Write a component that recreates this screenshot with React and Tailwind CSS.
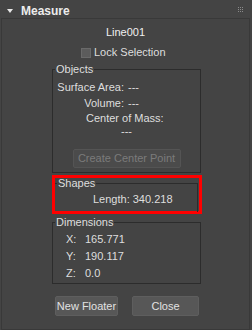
import React from "react";

function Legend({ children, className = "" }) {
  return (
    <legend className={`ml-[2px] px-[1px] h-[13px] leading-[13px] text-[#dedede] ${className}`}>
      {children}
    </legend>
  );
}

export default function App() {
  return (
    <div
      className="w-[252px] h-[330px] bg-[#444444] text-[11px] text-[#dedede] overflow-hidden"
      style={{ fontFamily: '"Liberation Sans", Arial, sans-serif' }}
    >
      {/* Header */}
      <div className="h-[18px] flex items-start pt-[4px]">
        <svg className="ml-[7px] mt-[5px]" width="6" height="4" viewBox="0 0 6 4">
          <polygon points="0,0 6,0 3,4" fill="#e8e8e8" />
        </svg>
        <span className="ml-[8px] text-[12px] leading-[14px] font-bold text-[#ececec]">Measure</span>
        <svg className="ml-auto mr-[8px] mt-[3px]" width="6" height="6" viewBox="0 0 6 6">
          {[0, 2, 4].map((y) =>
            [0, 2, 4].map((x) => (
              <rect key={`${x}-${y}`} x={x} y={y} width="1" height="1" fill="#8a8a8a" />
            ))
          )}
        </svg>
      </div>

      {/* Body */}
      <div className="ml-[1px] w-[249px] h-[312px] border border-[#393939] flex flex-col">
        <div className="mt-[7px] h-[13px] leading-[13px] text-center text-[#f0f0f0]">Line001</div>

        <div className="mt-[7px] h-[13px] flex items-center ml-[79px]">
          <div className="w-[10px] h-[10px] bg-[#5c5c5c] border border-[#6a6a6a]" />
          <span className="ml-[3px] leading-[13px]">Lock Selection</span>
        </div>

        {/* Objects */}
        <fieldset className="mt-[4px] ml-[50px] w-[149px] border border-[#2c2c2c] pt-[3px] pb-[4px]">
          <Legend>Objects</Legend>
          <div className="grid grid-cols-[71px_1fr] gap-x-[4px]">
            <div className="text-right leading-[16px] h-[16px]">Surface Area:</div>
            <div className="leading-[16px] h-[16px]">---</div>
            <div className="text-right leading-[16px] h-[16px]">Volume:</div>
            <div className="leading-[16px] h-[16px]">---</div>
          </div>
          <div className="mt-[1px] pl-[33px] h-[13px] leading-[13px]">Center of Mass:</div>
          <div className="h-[13px] leading-[13px] text-center">---</div>
          <div className="mt-[11px] mx-auto w-[108px] h-[19px] bg-[#4b4b4b] border border-[#545454] rounded-[2px] flex items-center justify-center text-[#7b7b7b]">
            Create Center Point
          </div>
        </fieldset>

        {/* Shapes (highlighted) */}
        <div className="mt-[2px] ml-[50px] w-[150px] h-[39px] border-[3px] border-[#ff0000]">
          <fieldset className="-mt-[1px] mr-[1px] border-t border-r border-[#2c2c2c] pt-[3px] h-[35px]">
            <Legend>Shapes</Legend>
            <div className="pl-[38px] h-[13px] leading-[13px]">Length: 340.218</div>
          </fieldset>
        </div>

        {/* Dimensions */}
        <fieldset className="mt-[2px] ml-[50px] w-[149px] border border-[#2c2c2c] pt-[2px] pb-[1px]">
          <Legend>Dimensions</Legend>
          {[
            ["X:", "165.771"],
            ["Y:", "190.117"],
            ["Z:", "0.0"],
          ].map(([k, v]) => (
            <div key={k} className="flex pl-[13px] h-[17px] leading-[17px]">
              <span className="w-[19px]">{k}</span>
              <span>{v}</span>
            </div>
          ))}
        </fieldset>

        {/* Buttons */}
        <div className="mt-[12px] ml-[53px] flex gap-[14px]">
          <div className="w-[63px] h-[20px] bg-[#575757] border border-[#5e5e5e] rounded-[2px] flex items-center justify-center text-[#e2e2e2]">
            New Floater
          </div>
          <div className="w-[67px] h-[20px] bg-[#575757] border border-[#5e5e5e] rounded-[2px] flex items-center justify-center text-[#e2e2e2]">
            Close
          </div>
        </div>
      </div>
    </div>
  );
}
